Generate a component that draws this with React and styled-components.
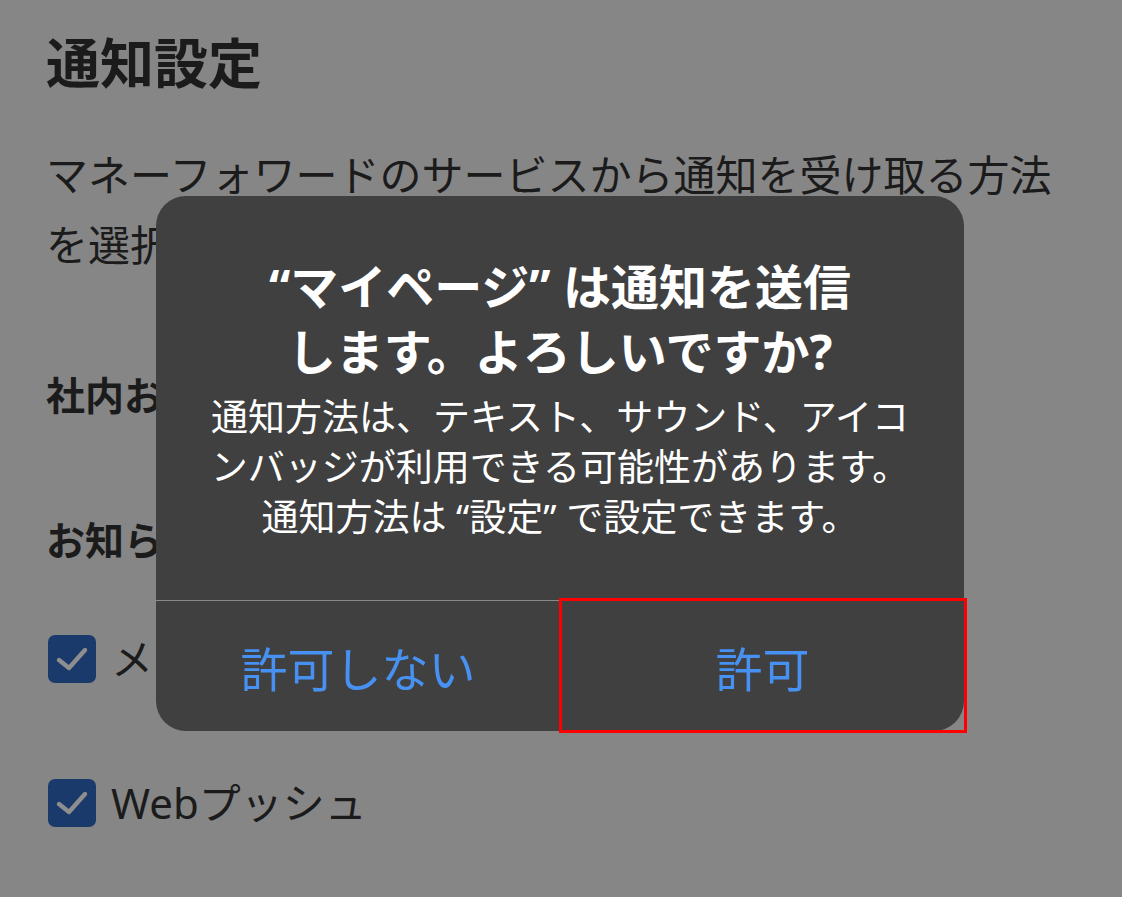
import styled, { createGlobalStyle } from 'styled-components';

const GlobalStyle = createGlobalStyle`
  html, body {
    margin: 0;
    padding: 0;
    background: #868686;
  }
  body {
    font-family: "Noto Sans", "Noto Sans CJK JP", sans-serif;
    color: #1b1b1b;
    -webkit-font-smoothing: antialiased;
  }
`;

const Page = styled.div`
  display: flex;
  flex-direction: column;
  padding: 31px 46px 0 46px;
  min-height: 897px;
  box-sizing: border-box;
`;

const Title = styled.h1`
  margin: 0;
  font-size: 54px;
  line-height: 64px;
  font-weight: 700;
`;

const Lead = styled.p`
  margin: 45px 0 0;
  font-size: 42px;
  line-height: 70px;
  font-weight: 400;
`;

const Heading = styled.h2`
  margin: ${(p) => p.$top}px 0 0;
  font-size: 39px;
  line-height: 50px;
  font-weight: 700;
`;

const CheckRow = styled.label`
  display: flex;
  align-items: center;
  gap: 15px;
  margin-top: ${(p) => p.$top}px;
  font-size: 42px;
  line-height: 48px;
`;

const Box = styled.span`
  display: flex;
  align-items: center;
  justify-content: center;
  width: 48px;
  height: 48px;
  flex-shrink: 0;
  border-radius: 7px;
  background: #1b3a6c;
  margin-left: 2px;
`;

const Overlay = styled.div`
  position: fixed;
  inset: 0;
  display: flex;
  align-items: flex-start;
  padding: 196px 0 0 156px;
`;

const Alert = styled.div`
  position: relative;
  width: 808px;
  background: #404040;
  border-radius: 30px;
  color: #ffffff;
  text-align: center;
`;

const AlertBody = styled.div`
  padding: 58px 20px 58px;
  border-bottom: 1px solid #8a8a8a;
`;

const AlertTitle = styled.div`
  font-size: 48px;
  line-height: 65px;
  font-weight: 700;
`;

const AlertMessage = styled.div`
  margin-top: 8px;
  font-size: 37px;
  line-height: 50px;
  font-weight: 400;
`;

const Actions = styled.div`
  display: grid;
  grid-template-columns: 1fr 1fr;
  height: 130px;
`;

const Action = styled.button`
  position: relative;
  background: none;
  border: none;
  border-left: ${(p) => (p.$highlight ? '1px solid #8a8a8a' : 'none')};
  padding: 0;
  font-family: inherit;
  font-size: 47px;
  font-weight: 400;
  color: #4791f2;
  cursor: pointer;

  ${(p) =>
    p.$highlight &&
    `
    &::after {
      content: '';
      position: absolute;
      top: -3px;
      left: -2px;
      right: -3px;
      bottom: -2px;
      border: 3px solid #ff0000;
    }
  `}
`;

function Check() {
  return (
    <svg width="36" height="28" viewBox="0 0 36 28">
      <polyline
        points="5,15 15,23 31,5"
        fill="none"
        stroke="#8e8e8e"
        strokeWidth="4.4"
        strokeLinecap="round"
        strokeLinejoin="round"
      />
    </svg>
  );
}

export default function App() {
  return (
    <>
      <GlobalStyle />
      <Page>
        <Title>通知設定</Title>
        <Lead>
          マネーフォワードのサービスから通知を受け取る方法を選択してください。
        </Lead>
        <Heading $top={90}>社内お知らせ</Heading>
        <Heading $top={95}>お知らせの受け取り方法</Heading>
        <CheckRow $top={70}>
          <Box>
            <Check />
          </Box>
          メール
        </CheckRow>
        <CheckRow $top={96}>
          <Box>
            <Check />
          </Box>
          Webプッシュ
        </CheckRow>
      </Page>

      <Overlay>
        <Alert>
          <AlertBody>
            <AlertTitle>
              “マイページ” は通知を送信
              <br />
              します。よろしいですか?
            </AlertTitle>
            <AlertMessage>
              通知方法は、テキスト、サウンド、アイコ
              <br />
              ンバッジが利用できる可能性があります。
              <br />
              通知方法は “設定” で設定できます。
            </AlertMessage>
          </AlertBody>
          <Actions>
            <Action>許可しない</Action>
            <Action $highlight>許可</Action>
          </Actions>
        </Alert>
      </Overlay>
    </>
  );
}
